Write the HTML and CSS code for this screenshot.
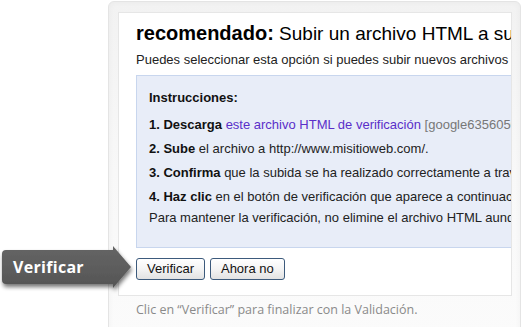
FILE: index.html
```html
<!DOCTYPE html>
<html lang="es">
<head>
<meta charset="utf-8">
<title>Verificar</title>
<link rel="stylesheet" href="styles.css">
</head>
<body>
<div class="stage">
  <div class="frame">
    <div class="panel">
      <h1 class="title"><b>recomendado:</b> Subir un archivo HTML a su sitio</h1>
      <p class="lead">Puedes seleccionar esta opción si puedes subir nuevos archivos al sitio.</p>
      <div class="box">
        <p class="box-head">Instrucciones:</p>
        <p class="step"><b>1. Descarga</b> <a class="link" href="#">este archivo HTML de verificación</a> <span class="muted">[google6356056b0c3e1a52.html]</span></p>
        <p class="step"><b>2. Sube</b> el archivo a http://www.misitioweb.com/.</p>
        <p class="step"><b>3. Confirma</b> que la subida se ha realizado correctamente a través del navegador.</p>
        <p class="step"><b>4. Haz clic</b> en el botón de verificación que aparece a continuación.</p>
        <p class="note">Para mantener la verificación, no elimine el archivo HTML aunque la verificación se haya realizado.</p>
      </div>
      <div class="actions">
        <button class="btn">Verificar</button>
        <button class="btn">Ahora no</button>
      </div>
    </div>
    <p class="footer">Clic en “Verificar” para finalizar con la Validación.</p>
  </div>
  <div class="callout">
    <svg class="callout-shape" width="140" height="60" viewBox="0 0 140 60">
      <defs>
        <linearGradient id="cg" x1="0" y1="0" x2="0" y2="1">
          <stop offset="0" stop-color="#656565"/>
          <stop offset="1" stop-color="#555555"/>
        </linearGradient>
        <filter id="sh" x="-10%" y="-20%" width="130%" height="160%">
          <feGaussianBlur in="SourceAlpha" stdDeviation="2.2"/>
          <feOffset dx="1" dy="3" result="b"/>
          <feComponentTransfer><feFuncA type="linear" slope="0.55"/></feComponentTransfer>
          <feMerge><feMergeNode/><feMergeNode in="SourceGraphic"/></feMerge>
        </filter>
      </defs>
      <path filter="url(#sh)" fill="url(#cg)" d="M6 10 H113 V6 L131 27 L113 48 V44 H6 Q2 44 2 40 V14 Q2 10 6 10 Z"/>
    </svg>
    <span class="callout-text">Verificar</span>
  </div>
</div>
</body>
</html>
```

FILE: styles.css
```css
html, body {
  margin: 0;
  padding: 0;
  background: #ffffff;
}

.stage {
  position: relative;
  width: 522px;
  height: 327px;
  overflow: hidden;
  padding: 1px 0 0 108px;
  box-sizing: border-box;
}

.frame {
  width: 413px;
  height: 340px;
  box-sizing: border-box;
  border: 1px solid #e4e4e4;
  border-radius: 6px;
  background: linear-gradient(180deg, #f2f2f2 0%, #f8f8f8 50%, #fbfbfb 100%);
  box-shadow: inset 0 0 6px rgba(0, 0, 0, 0.04);
  padding: 10px 8px 0 9px;
}

.panel {
  background: #ffffff;
  border: 1px solid #e6e6e6;
  height: 284px;
  box-sizing: border-box;
  overflow: hidden;
  padding: 8px 0 0 17px;
  font-family: "Liberation Sans", Arial, sans-serif;
  color: #222;
  white-space: nowrap;
}

.title {
  margin: 0;
  font-size: 19px;
  line-height: 24px;
  font-weight: normal;
  color: #000;
}

.title b {
  font-weight: bold;
  font-size: 20px;
}

.lead {
  margin: 6px 0 0;
  font-size: 13px;
  line-height: 16px;
  color: #222;
}

.box {
  margin-top: 7px;
  width: 420px;
  background: #e8edf8;
  border: 1px solid #c8d6ee;
  padding: 14px 0 21px 12px;
  font-size: 13px;
  line-height: 16px;
}

.box p {
  margin: 0;
}

.box-head {
  font-weight: bold;
  color: #111;
  margin-bottom: 11px !important;
}

.step {
  margin-bottom: 8px !important;
}

.step b {
  color: #111;
}

.note {
  margin-top: -3px !important;
}

.link {
  color: #5a2fc9;
  text-decoration: none;
}

.muted {
  color: #777;
}

.actions {
  margin-top: 10px;
  display: flex;
  gap: 5px;
}

.btn {
  font-family: "Liberation Sans", Arial, sans-serif;
  font-size: 13px;
  line-height: 16px;
  color: #111;
  padding: 2px 10px;
  border: 1px solid #3c5a7c;
  border-radius: 3px;
  background: linear-gradient(180deg, #ffffff 0%, #f4f4f4 50%, #e2e2e2 100%);
  cursor: pointer;
}

.footer {
  margin: 6px 0 0 18px;
  font-family: "Open Sans", "Liberation Sans", sans-serif;
  font-size: 12.5px;
  line-height: 16px;
  color: #8a8a8a;
  white-space: nowrap;
}

.callout {
  position: absolute;
  left: 0;
  top: 240px;
  width: 140px;
  height: 60px;
}

.callout-shape {
  position: absolute;
  left: 0;
  top: 0;
}

.callout-text {
  position: absolute;
  left: 13px;
  top: 16px;
  font-family: "Open Sans", "Liberation Sans", sans-serif;
  font-weight: 700;
  font-size: 16px;
  line-height: 22px;
  letter-spacing: 0.3px;
  color: #ffffff;
}
```
